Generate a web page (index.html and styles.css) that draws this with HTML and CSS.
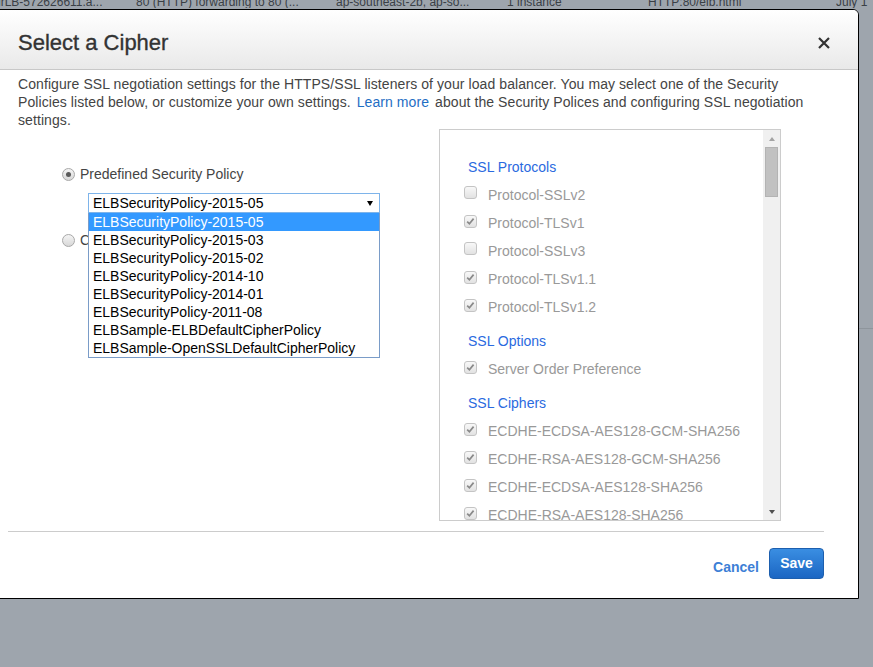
FILE: index.html
```html
<!DOCTYPE html>
<html lang="en">
<head>
<meta charset="utf-8">
<title>Select a Cipher</title>
<link rel="stylesheet" href="styles.css">
</head>
<body>
<div class="page">
  <div class="bg-row">
    <span class="bg-first">lrLB-572626611.a...</span>
    <span>80 (HTTP) forwarding to 80 (...</span>
    <span>ap-southeast-2b, ap-so...</span>
    <span>1 instance</span>
    <span>HTTP:80/elb.html</span>
    <span>July 1</span>
  </div>
  <div class="bg-row2"></div>
</div>

<div class="modal">
  <div class="modal-header">
    <h2 class="modal-title">Select a Cipher</h2>
    <button class="close" aria-label="Close">
      <svg width="12" height="12" viewBox="0 0 12 12"><path d="M1 1 L11 11 M11 1 L1 11" stroke="#333" stroke-width="2.2" fill="none"/></svg>
    </button>
  </div>
  <div class="modal-body">
    <p class="intro">Configure SSL negotiation settings for the HTTPS/SSL listeners of your load balancer. You may select one of the Security Policies listed below, or customize your own settings. <a href="#" class="learn">Learn more</a> about the Security Polices and configuring SSL negotiation settings.</p>
    <div class="content">
      <div class="policy-col">
        <div class="radio-row"><span class="radio checked"></span>Predefined Security Policy</div>
        <div class="select-wrap">
          <div class="select"><span>ELBSecurityPolicy-2015-05</span><span class="arrow"></span></div>
          <ul class="options">
            <li class="active">ELBSecurityPolicy-2015-05</li>
            <li>ELBSecurityPolicy-2015-03</li>
            <li>ELBSecurityPolicy-2015-02</li>
            <li>ELBSecurityPolicy-2014-10</li>
            <li>ELBSecurityPolicy-2014-01</li>
            <li>ELBSecurityPolicy-2011-08</li>
            <li>ELBSample-ELBDefaultCipherPolicy</li>
            <li>ELBSample-OpenSSLDefaultCipherPolicy</li>
          </ul>
        </div>
        <div class="radio-row second"><span class="radio"></span>Custom Security Policy</div>
      </div>
      <div class="panel">
        <div class="panel-scroll">
          <section class="group">
            <h3>SSL Protocols</h3>
            <div class="check-row"><span class="cb"></span>Protocol-SSLv2</div>
            <div class="check-row"><span class="cb on"><svg width="11" height="11" viewBox="0 0 11 11"><path d="M2.2 5.6 L4.4 7.8 L8.6 2.6" stroke="#8a8a8a" stroke-width="1.7" fill="none"/></svg></span>Protocol-TLSv1</div>
            <div class="check-row"><span class="cb"></span>Protocol-SSLv3</div>
            <div class="check-row"><span class="cb on"><svg width="11" height="11" viewBox="0 0 11 11"><path d="M2.2 5.6 L4.4 7.8 L8.6 2.6" stroke="#8a8a8a" stroke-width="1.7" fill="none"/></svg></span>Protocol-TLSv1.1</div>
            <div class="check-row"><span class="cb on"><svg width="11" height="11" viewBox="0 0 11 11"><path d="M2.2 5.6 L4.4 7.8 L8.6 2.6" stroke="#8a8a8a" stroke-width="1.7" fill="none"/></svg></span>Protocol-TLSv1.2</div>
          </section>
          <section class="group">
            <h3>SSL Options</h3>
            <div class="check-row"><span class="cb on"><svg width="11" height="11" viewBox="0 0 11 11"><path d="M2.2 5.6 L4.4 7.8 L8.6 2.6" stroke="#8a8a8a" stroke-width="1.7" fill="none"/></svg></span>Server Order Preference</div>
          </section>
          <section class="group">
            <h3>SSL Ciphers</h3>
            <div class="check-row"><span class="cb on"><svg width="11" height="11" viewBox="0 0 11 11"><path d="M2.2 5.6 L4.4 7.8 L8.6 2.6" stroke="#8a8a8a" stroke-width="1.7" fill="none"/></svg></span>ECDHE-ECDSA-AES128-GCM-SHA256</div>
            <div class="check-row"><span class="cb on"><svg width="11" height="11" viewBox="0 0 11 11"><path d="M2.2 5.6 L4.4 7.8 L8.6 2.6" stroke="#8a8a8a" stroke-width="1.7" fill="none"/></svg></span>ECDHE-RSA-AES128-GCM-SHA256</div>
            <div class="check-row"><span class="cb on"><svg width="11" height="11" viewBox="0 0 11 11"><path d="M2.2 5.6 L4.4 7.8 L8.6 2.6" stroke="#8a8a8a" stroke-width="1.7" fill="none"/></svg></span>ECDHE-ECDSA-AES128-SHA256</div>
            <div class="check-row"><span class="cb on"><svg width="11" height="11" viewBox="0 0 11 11"><path d="M2.2 5.6 L4.4 7.8 L8.6 2.6" stroke="#8a8a8a" stroke-width="1.7" fill="none"/></svg></span>ECDHE-RSA-AES128-SHA256</div>
            <div class="check-row"><span class="cb on"><svg width="11" height="11" viewBox="0 0 11 11"><path d="M2.2 5.6 L4.4 7.8 L8.6 2.6" stroke="#8a8a8a" stroke-width="1.7" fill="none"/></svg></span>ECDHE-ECDSA-AES128-SHA</div>
          </section>
        </div>
        <div class="scrollbar">
          <div class="sb-btn"><span class="sb-up"></span></div>
          <div class="sb-thumb"></div>
          <div class="sb-track"></div>
          <div class="sb-btn"><span class="sb-down"></span></div>
        </div>
      </div>
    </div>
  </div>
  <div class="modal-footer">
    <a href="#" class="cancel">Cancel</a>
    <button class="save">Save</button>
  </div>
</div>
</body>
</html>
```
FILE: styles.css
```css
* { box-sizing: border-box; }

body {
  margin: 0;
  height: 667px;
  overflow: hidden;
  background: #9ea5ad;
  font-family: "Liberation Sans", Arial, sans-serif;
}

/* background page behind the modal */
.bg-row {
  display: grid;
  grid-template-columns: 136px 200px 171px 141px 188px 1fr;
  margin-top: -4px;
  height: 12px;
  font-size: 12px;
  line-height: 12px;
  color: #3a4046;
  white-space: nowrap;
  overflow: hidden;
}
.bg-row span { overflow: hidden; }
.bg-first { margin-left: -2px; }
.bg-row2 {
  height: 321px;
  border-bottom: 1px solid #8e959c;
}

/* modal */
.modal {
  position: absolute;
  top: 9px;
  left: -1px;
  width: 860px;
  height: 590px;
  background: #fff;
  border: 1px solid #000;
  border-radius: 0 6px 0 0;
  overflow: hidden;
  display: flex;
  flex-direction: column;
}

.modal-header {
  height: 60px;
  flex: none;
  display: flex;
  align-items: center;
  justify-content: space-between;
  padding: 6px 28px 0 18px;
  background: linear-gradient(#ffffff, #e9e9e9);
  border-bottom: 1px solid #c8c8c8;
}
.modal-title {
  margin: 0;
  font-size: 22px;
  font-weight: normal;
  line-height: 1;
  color: #333;
  -webkit-text-stroke: 0.35px #333;
}
.close {
  border: 0;
  background: none;
  padding: 0;
  width: 12px;
  height: 12px;
  display: flex;
}

.modal-body {
  padding: 5px 34px 0 18px;
  flex: none;
}
.intro {
  margin: 0;
  font-size: 14px;
  line-height: 18px;
  letter-spacing: 0.08px;
  color: #444;
}
.learn {
  color: #1f6ec4;
  text-decoration: none;
  margin: 0 2px;
}

.content { display: flex; }

.policy-col {
  width: 421px;
  padding-top: 36px;
  font-size: 14px;
  line-height: 18px;
  color: #444;
}
.radio-row {
  display: flex;
  align-items: center;
  margin-left: 44px;
}
.radio-row.second { margin-top: 18px; }
.radio {
  width: 13px;
  height: 13px;
  flex: none;
  border-radius: 50%;
  border: 1px solid #a8a8a8;
  background: linear-gradient(#f4f4f4, #d8d8d8);
  margin-right: 5px;
  display: flex;
  align-items: center;
  justify-content: center;
}
.radio.checked::after {
  content: "";
  width: 5px;
  height: 5px;
  border-radius: 50%;
  background: #5a5a5a;
}

.select-wrap {
  position: relative;
  margin: 10px 0 0 70px;
  width: 292px;
}
.select {
  height: 20px;
  border: 1px solid #7eb4ea;
  padding: 0 6px 0 4px;
  display: flex;
  align-items: center;
  justify-content: space-between;
  color: #000;
}
.arrow {
  width: 0;
  height: 0;
  border-left: 3.5px solid transparent;
  border-right: 3.5px solid transparent;
  border-top: 5px solid #000;
}
.options {
  position: absolute;
  top: 100%;
  left: 0;
  right: 0;
  margin: 0;
  padding: 0;
  list-style: none;
  background: #fff;
  border: 1px solid #7a9cc8;
  border-top: 0;
  z-index: 2;
}
.options li {
  height: 18px;
  line-height: 18px;
  padding-left: 4px;
  color: #000;
  white-space: nowrap;
}
.options li.active {
  background: #3399ff;
  color: #fff;
}

/* cipher panel */
.panel {
  width: 342px;
  height: 392px;
  flex: none;
  border: 1px solid #ccc;
  display: flex;
}
.panel-scroll {
  flex: 1;
  overflow: hidden;
  padding: 23px 0 0 24px;
}
.group + .group { margin-top: 6px; }
.group h3 {
  margin: 0;
  padding-left: 4px;
  font-size: 14px;
  font-weight: normal;
  line-height: 28px;
  color: #2a6ae0;
}
.check-row {
  font-size: 14px;
  line-height: 28px;
  color: #999;
  white-space: nowrap;
}
.cb {
  display: inline-flex;
  align-items: center;
  justify-content: center;
  width: 13px;
  height: 13px;
  margin-right: 11px;
  vertical-align: 1px;
  border: 1px solid #c4c4c4;
  border-radius: 3px;
  background: linear-gradient(#f8f8f8, #e2e2e2);
}

.scrollbar {
  width: 17px;
  flex: none;
  background: #f0f0f0;
  display: flex;
  flex-direction: column;
  align-items: center;
}
.sb-btn {
  height: 17px;
  width: 100%;
  display: flex;
  align-items: center;
  justify-content: center;
}
.sb-up {
  width: 0;
  height: 0;
  border-left: 3.5px solid transparent;
  border-right: 3.5px solid transparent;
  border-bottom: 4px solid #a3a3a3;
}
.sb-down {
  width: 0;
  height: 0;
  border-left: 3.5px solid transparent;
  border-right: 3.5px solid transparent;
  border-top: 4px solid #505050;
}
.sb-thumb {
  width: 13px;
  height: 50px;
  background: #c1c1c1;
  border: 1px solid #b3b3b3;
}
.sb-track { flex: 1; }

/* footer */
.modal-footer {
  margin: 10px 34px 0 8px;
  border-top: 1px solid #ccc;
  padding-top: 16px;
  display: flex;
  justify-content: flex-end;
  align-items: flex-start;
  gap: 10px;
}
.cancel {
  padding-top: 12px;
  font-size: 14px;
  line-height: 14px;
  font-weight: bold;
  color: #3d7fd6;
  text-decoration: none;
}
.save {
  width: 55px;
  height: 31px;
  padding: 0 0 2px;
  border: 1px solid #1d5fae;
  border-radius: 4px;
  background: linear-gradient(#3a8ee2, #1b66c3);
  color: #fff;
  font-family: "Liberation Sans", Arial, sans-serif;
  font-size: 14px;
  font-weight: bold;
}
```
